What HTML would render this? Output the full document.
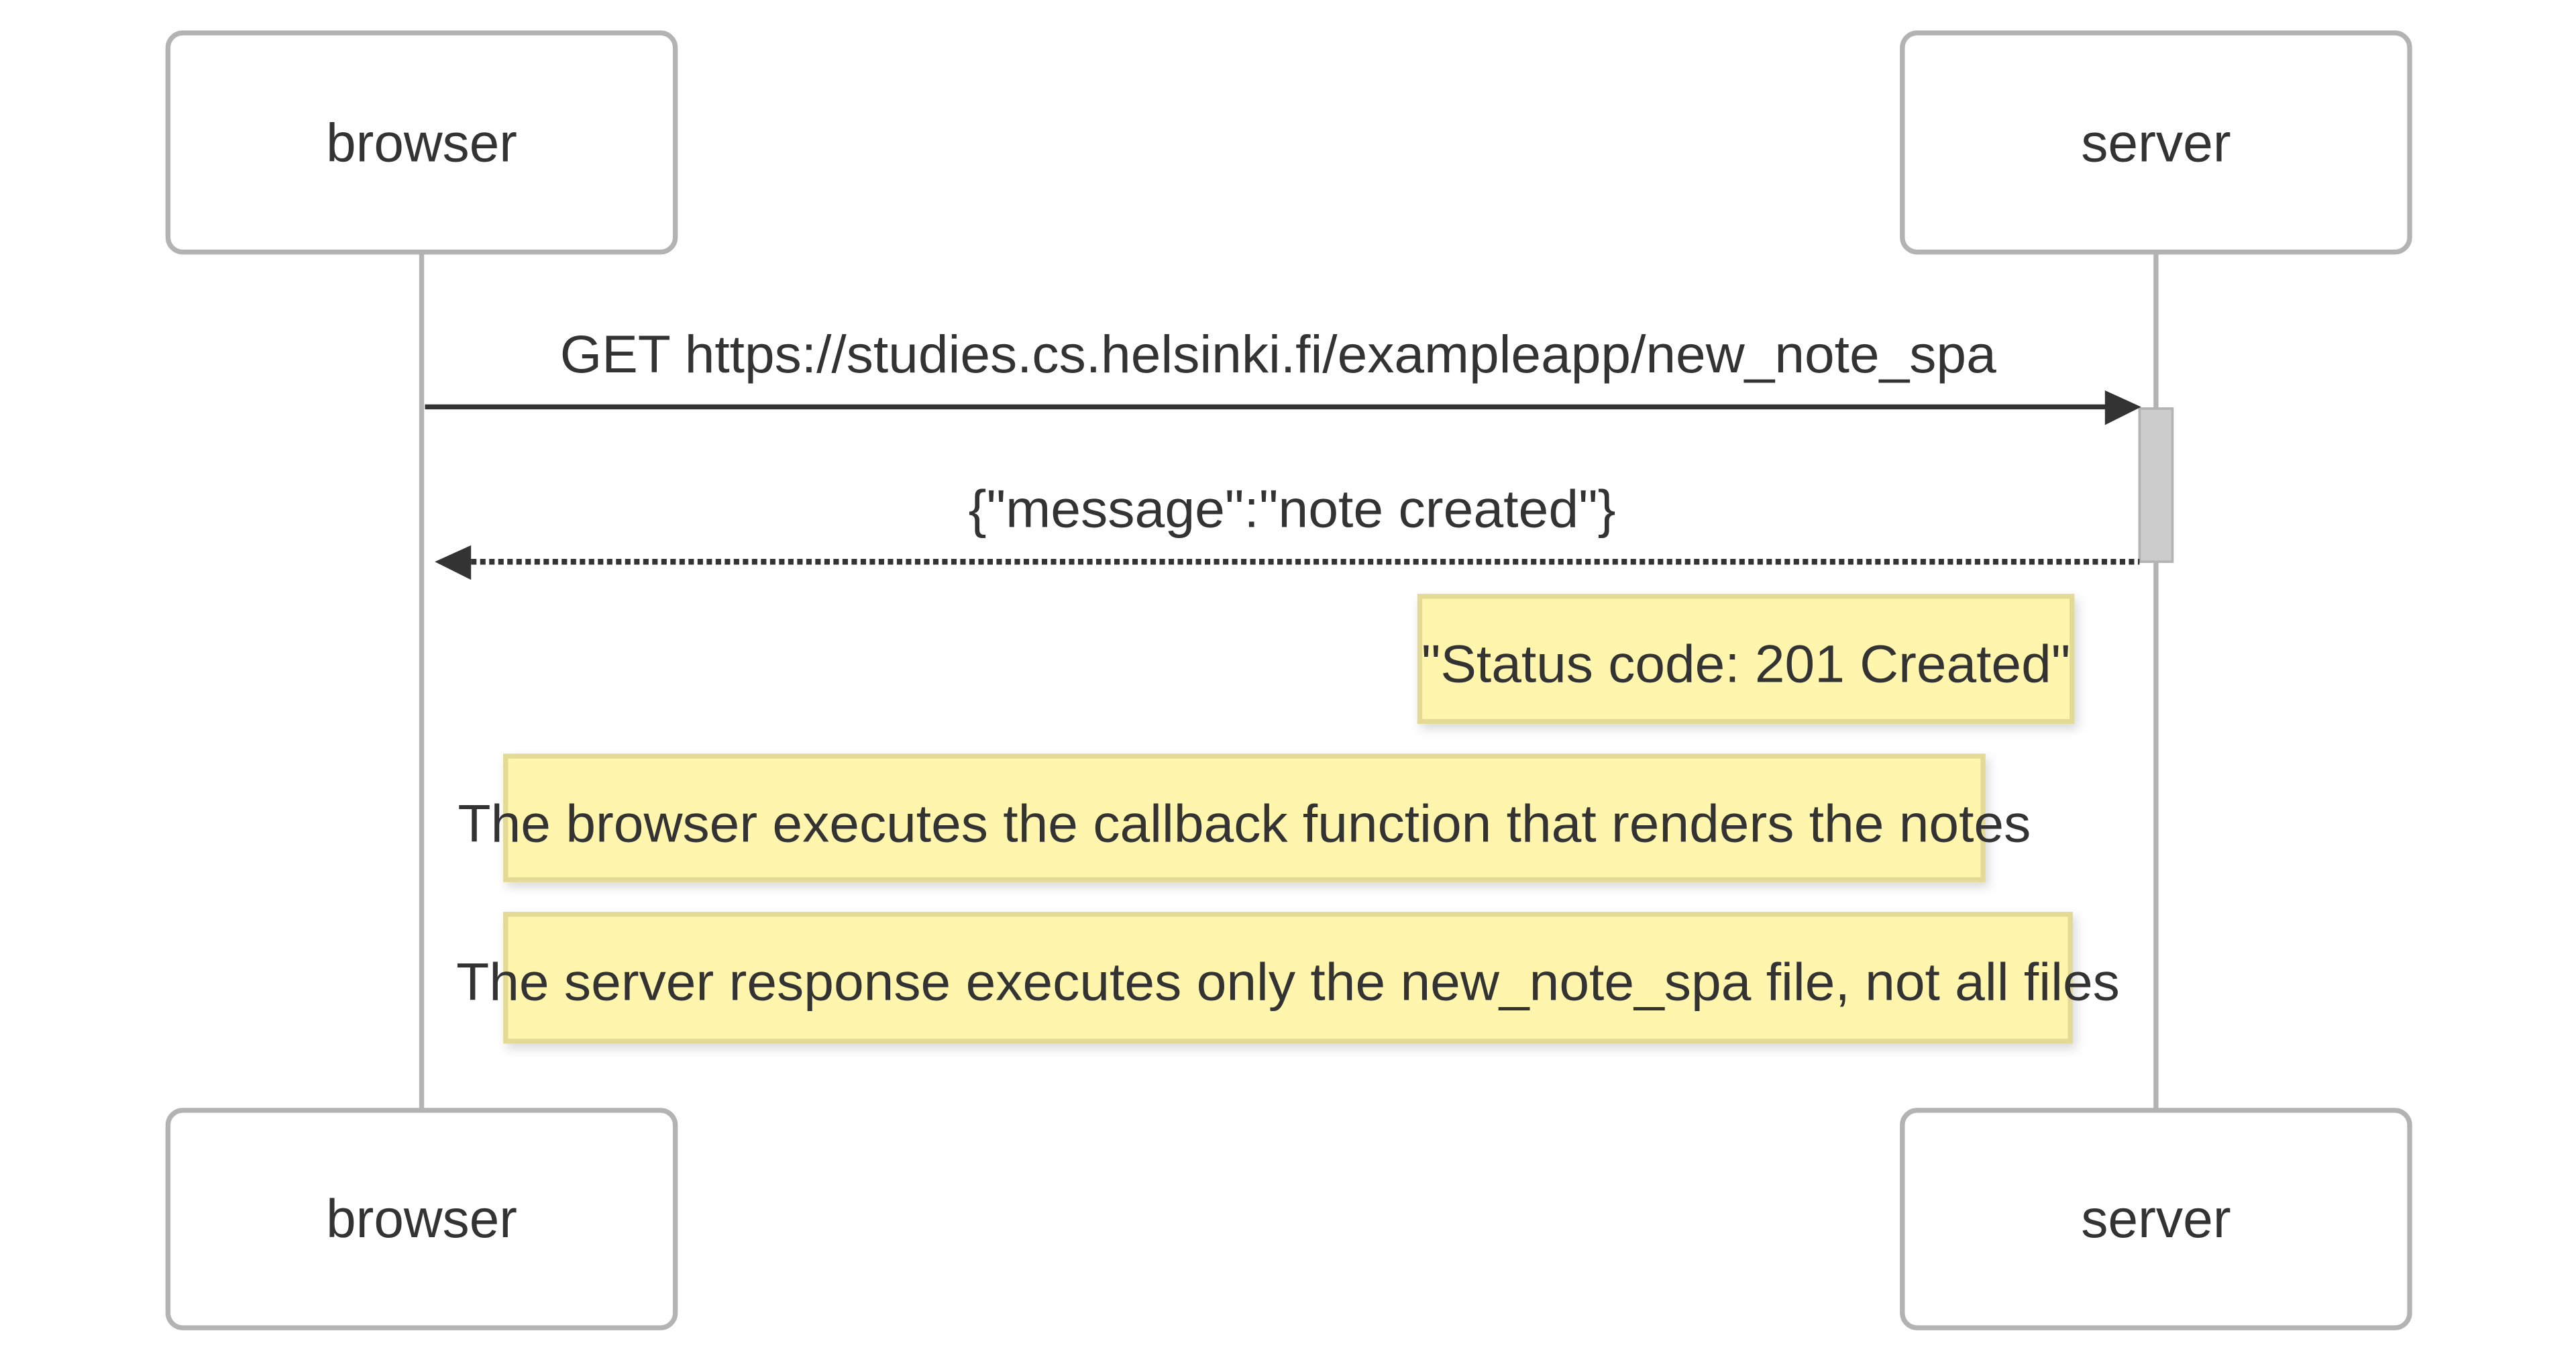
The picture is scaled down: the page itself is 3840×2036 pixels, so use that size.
<!DOCTYPE html>
<html><head><meta charset="utf-8"><style>html,body{margin:0;padding:0;background:#fff;}svg{display:block}</style></head>
<body>
<svg width="3840" height="2036" viewBox="0 0 1564 829.2" preserveAspectRatio="none" xmlns="http://www.w3.org/2000/svg" font-family="'Liberation Sans', Arial, sans-serif" fill="#333">
<defs><filter id="sh" x="-5%" y="-20%" width="110%" height="150%"><feDropShadow dx="2" dy="3" stdDeviation="3" flood-color="#000" flood-opacity="0.15"/></filter></defs>
<rect width="1564" height="830" fill="#fff"/>
<line x1="256" y1="153" x2="256" y2="674" stroke="#b3b3b3" stroke-width="3"/>
<line x1="1309" y1="153" x2="1309" y2="674" stroke="#b3b3b3" stroke-width="3"/>
<g fill="#fff" stroke="#b3b3b3" stroke-width="3">
<rect x="102" y="20" width="308" height="133" rx="9"/>
<rect x="1155" y="20" width="308" height="133" rx="9"/>
<rect x="102" y="674" width="308" height="132" rx="9"/>
<rect x="1155" y="674" width="308" height="132" rx="9"/>
</g>
<g font-size="33" text-anchor="middle">
<text x="256" y="98" textLength="116" lengthAdjust="spacingAndGlyphs">browser</text>
<text x="1309" y="98" textLength="91" lengthAdjust="spacingAndGlyphs">server</text>
<text x="256" y="751" textLength="116" lengthAdjust="spacingAndGlyphs">browser</text>
<text x="1309" y="751" textLength="91" lengthAdjust="spacingAndGlyphs">server</text>
</g>
<rect x="1299" y="248" width="20" height="93" fill="#ccc" stroke="#b3b3b3" stroke-width="1.5"/>
<line x1="258" y1="247" x2="1282" y2="247" stroke="#333" stroke-width="3"/>
<path d="M1278 237 L1300 247 L1278 258 Z" fill="#333"/>
<text x="340" y="226" font-size="32" textLength="872" lengthAdjust="spacingAndGlyphs">GET https://studies.cs.helsinki.fi/exampleapp/new_note_spa</text>
<line x1="286" y1="341" x2="1299" y2="341" stroke="#333" stroke-width="3.5" stroke-dasharray="3.3,2.2"/>
<path d="M286 331 L264 341 L286 352 Z" fill="#333"/>
<text x="588" y="320" font-size="32" textLength="393" lengthAdjust="spacingAndGlyphs">{"message":"note created"}</text>
<g fill="#fff5ad" stroke="#e3da95" stroke-width="3" filter="url(#sh)">
<rect x="862" y="362" width="396" height="76"/>
<rect x="307" y="459" width="897" height="75"/>
<rect x="307" y="555" width="950" height="77"/>
</g>
<g font-size="32">
<text x="863" y="414" textLength="394" lengthAdjust="spacingAndGlyphs">"Status code: 201 Created"</text>
<text x="278" y="511" textLength="955" lengthAdjust="spacingAndGlyphs">The browser executes the callback function that renders the notes</text>
<text x="277" y="607" textLength="1010" lengthAdjust="spacingAndGlyphs">The server response executes only the new_note_spa file, not all files</text>
</g>
</svg>
</body></html>
